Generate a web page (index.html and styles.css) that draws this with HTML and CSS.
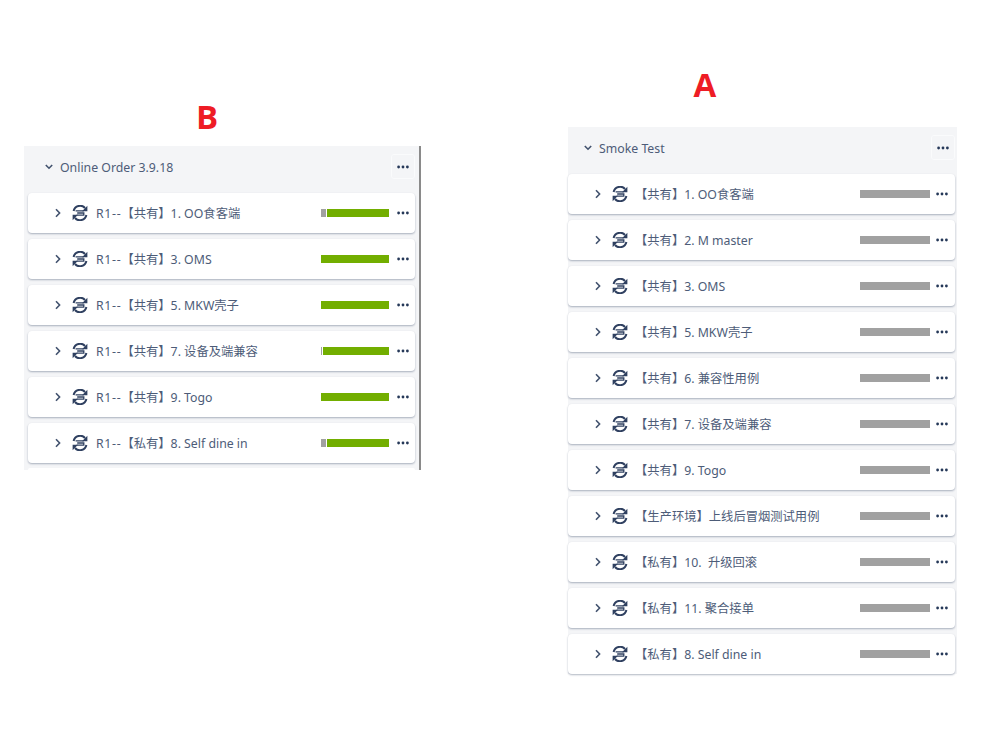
FILE: index.html
```html
<!DOCTYPE html>
<html lang="zh">
<head>
<meta charset="utf-8">
<title>Test cycles</title>
<link rel="stylesheet" href="styles.css">
</head>
<body>
<svg class="defs" width="0" height="0" aria-hidden="true">
  <symbol id="cycle" viewBox="0 0 16 16">
    <path d="M1.6 6A6.6 6.6 0 0 1 13 3" fill="none" stroke="currentColor" stroke-width="2"/>
    <path d="M15.4 .8v5.4h-5.4z" fill="currentColor"/>
    <path d="M14.4 10A6.6 6.6 0 0 1 3 13" fill="none" stroke="currentColor" stroke-width="2"/>
    <path d="M.6 15.2V9.8H6z" fill="currentColor"/>
    <path d="M3.6 5.9h8.2M5.2 8h6.6v2.1H4.6" fill="none" stroke="currentColor" stroke-width="1.3"/>
  </symbol>
  <symbol id="dots" viewBox="0 0 12 4">
    <circle cx="1.6" cy="2" r="1.4" fill="currentColor"/>
    <circle cx="6" cy="2" r="1.4" fill="currentColor"/>
    <circle cx="10.4" cy="2" r="1.4" fill="currentColor"/>
  </symbol>
  <symbol id="right" viewBox="0 0 8 10">
    <path d="M2 1.2 5.6 5 2 8.8" fill="none" stroke="currentColor" stroke-width="1.6"/>
  </symbol>
  <symbol id="down" viewBox="0 0 8 6">
    <path d="M.8 1 4 4.2 7.2 1" fill="none" stroke="currentColor" stroke-width="1.6"/>
  </symbol>
</svg>
<main class="canvas">
  <section class="group group-b">
    <h1 class="mark">B</h1>
    <div class="panel panel-b">
      <header class="head"><svg class="down"><use href="#down"/></svg><span class="title">Online Order 3.9.18</span><button class="more"><svg class="dots"><use href="#dots"/></svg></button></header>
      <ul class="rows">
        <li class="row"><svg class="right"><use href="#right"/></svg><svg class="cycle"><use href="#cycle"/></svg><span class="name"><span class="pre">R1--</span>【共有】1. OO食客端</span><span class="bar"><i class="seg grey" style="width:5px"></i><i class="seg green"></i></span><svg class="dots"><use href="#dots"/></svg></li>
        <li class="row"><svg class="right"><use href="#right"/></svg><svg class="cycle"><use href="#cycle"/></svg><span class="name"><span class="pre">R1--</span>【共有】3. OMS</span><span class="bar"><i class="seg green"></i></span><svg class="dots"><use href="#dots"/></svg></li>
        <li class="row"><svg class="right"><use href="#right"/></svg><svg class="cycle"><use href="#cycle"/></svg><span class="name"><span class="pre">R1--</span>【共有】5. MKW壳子</span><span class="bar"><i class="seg green"></i></span><svg class="dots"><use href="#dots"/></svg></li>
        <li class="row"><svg class="right"><use href="#right"/></svg><svg class="cycle"><use href="#cycle"/></svg><span class="name"><span class="pre">R1--</span>【共有】7. 设备及端兼容</span><span class="bar"><i class="seg grey" style="width:1px"></i><i class="seg green"></i></span><svg class="dots"><use href="#dots"/></svg></li>
        <li class="row"><svg class="right"><use href="#right"/></svg><svg class="cycle"><use href="#cycle"/></svg><span class="name"><span class="pre">R1--</span>【共有】9. Togo</span><span class="bar"><i class="seg green"></i></span><svg class="dots"><use href="#dots"/></svg></li>
        <li class="row"><svg class="right"><use href="#right"/></svg><svg class="cycle"><use href="#cycle"/></svg><span class="name"><span class="pre">R1--</span>【私有】8. Self dine in</span><span class="bar"><i class="seg grey" style="width:5px"></i><i class="seg green"></i></span><svg class="dots"><use href="#dots"/></svg></li>
        <li class="row row-cut"></li>
      </ul>
    </div>
  </section>
  <section class="group group-a">
    <h1 class="mark">A</h1>
    <div class="panel panel-a">
      <header class="head"><svg class="down"><use href="#down"/></svg><span class="title">Smoke Test</span><button class="more"><svg class="dots"><use href="#dots"/></svg></button></header>
      <ul class="rows">
        <li class="row"><svg class="right"><use href="#right"/></svg><svg class="cycle"><use href="#cycle"/></svg><span class="name">【共有】1. OO食客端</span><span class="bar"><i class="seg grey"></i></span><svg class="dots"><use href="#dots"/></svg></li>
        <li class="row"><svg class="right"><use href="#right"/></svg><svg class="cycle"><use href="#cycle"/></svg><span class="name">【共有】2. M master</span><span class="bar"><i class="seg grey"></i></span><svg class="dots"><use href="#dots"/></svg></li>
        <li class="row"><svg class="right"><use href="#right"/></svg><svg class="cycle"><use href="#cycle"/></svg><span class="name">【共有】3. OMS</span><span class="bar"><i class="seg grey"></i></span><svg class="dots"><use href="#dots"/></svg></li>
        <li class="row"><svg class="right"><use href="#right"/></svg><svg class="cycle"><use href="#cycle"/></svg><span class="name">【共有】5. MKW壳子</span><span class="bar"><i class="seg grey"></i></span><svg class="dots"><use href="#dots"/></svg></li>
        <li class="row"><svg class="right"><use href="#right"/></svg><svg class="cycle"><use href="#cycle"/></svg><span class="name">【共有】6. 兼容性用例</span><span class="bar"><i class="seg grey"></i></span><svg class="dots"><use href="#dots"/></svg></li>
        <li class="row"><svg class="right"><use href="#right"/></svg><svg class="cycle"><use href="#cycle"/></svg><span class="name">【共有】7. 设备及端兼容</span><span class="bar"><i class="seg grey"></i></span><svg class="dots"><use href="#dots"/></svg></li>
        <li class="row"><svg class="right"><use href="#right"/></svg><svg class="cycle"><use href="#cycle"/></svg><span class="name">【共有】9. Togo</span><span class="bar"><i class="seg grey"></i></span><svg class="dots"><use href="#dots"/></svg></li>
        <li class="row"><svg class="right"><use href="#right"/></svg><svg class="cycle"><use href="#cycle"/></svg><span class="name">【生产环境】上线后冒烟测试用例</span><span class="bar"><i class="seg grey"></i></span><svg class="dots"><use href="#dots"/></svg></li>
        <li class="row"><svg class="right"><use href="#right"/></svg><svg class="cycle"><use href="#cycle"/></svg><span class="name">【私有】10.&nbsp; 升级回滚</span><span class="bar"><i class="seg grey"></i></span><svg class="dots"><use href="#dots"/></svg></li>
        <li class="row"><svg class="right"><use href="#right"/></svg><svg class="cycle"><use href="#cycle"/></svg><span class="name">【私有】11. 聚合接单</span><span class="bar"><i class="seg grey"></i></span><svg class="dots"><use href="#dots"/></svg></li>
        <li class="row"><svg class="right"><use href="#right"/></svg><svg class="cycle"><use href="#cycle"/></svg><span class="name">【私有】8. Self dine in</span><span class="bar"><i class="seg grey"></i></span><svg class="dots"><use href="#dots"/></svg></li>
      </ul>
    </div>
  </section>
</main>
</body>
</html>
```
FILE: styles.css
```css
* { box-sizing: border-box; }
html, body { margin: 0; height: 100%; background: #fff; overflow: hidden; }
body {
  font-family: "Noto Sans", "Noto Sans CJK SC", sans-serif;
  font-size: 12.3px;
  color: #4d5c78;
}
.defs { position: absolute; }
.canvas {
  display: flex;
  align-items: flex-start;
  padding-left: 24px;
  gap: 147px;
}
.group { display: flex; flex-direction: column; }
.group-b { width: 397px; padding-top: 99px; }
.group-a { width: 389px; padding-top: 67px; }
.mark {
  margin: 0;
  height: 47px;
  text-align: center;
  font: 700 33px/36px "Open Sans", "Liberation Sans", sans-serif;
  color: #ee1c25;
}
.group-b .mark { padding-right: 31px; }
.group-a .mark { height: 60px; padding-right: 115px; }
.panel { background: #f4f5f7; }
.panel-b { border-right: 2px solid #8a8a8a; padding: 0 4px 0 4px; }
.panel-a { padding: 0 2px 0 0; }
.head { display: flex; align-items: center; height: 47px; padding-bottom: 6px; }
.panel-b .head { padding-left: 17px; }
.panel-a .head { padding-left: 16px; }
.down { width: 8px; height: 6px; color: #42526e; flex: none; }
.title { margin-left: 7px; flex: 1; padding-top: 2px; }
.more {
  width: 24px; height: 25px;
  display: flex; align-items: center; justify-content: center;
  padding: 0;
  background: transparent;
  border: 1px solid #fafbfc;
  border-radius: 3px;
  color: #253858;
}
.rows { list-style: none; margin: 0; padding: 0; display: flex; flex-direction: column; gap: 6px; }
.row {
  height: 40px;
  display: flex;
  align-items: center;
  background: #fff;
  border-radius: 4px;
  box-shadow: 0 1px 2px rgba(9, 30, 66, .32);
  padding: 0 6px 0 26px;
}
.row-cut { height: 2px; margin-top: -1px; box-shadow: none; border-radius: 3px 3px 0 0; }
.panel-a .row { padding-right: 7px; }
.right { width: 8px; height: 10px; color: #42526e; flex: none; }
.cycle { width: 16px; height: 16px; margin-left: 10px; color: #2f4060; flex: none; }
.name { margin-left: 8px; flex: 1; white-space: nowrap; padding-bottom: 1px; }
.panel-a .name { margin-left: 7px; }
.pre { letter-spacing: .7px; }
.bar { display: flex; width: 68px; height: 8px; gap: 1px; margin-right: 8px; flex: none; }
.panel-a .bar { width: 70px; margin-right: 6px; }
.seg { display: block; height: 100%; }
.seg.grey { background: #a1a1a1; flex: none; }
.seg.green { background: #72ae00; flex: 1; }
.panel-a .seg.grey { flex: 1; }
.dots { width: 12px; height: 4px; color: #253858; flex: none; }
```
